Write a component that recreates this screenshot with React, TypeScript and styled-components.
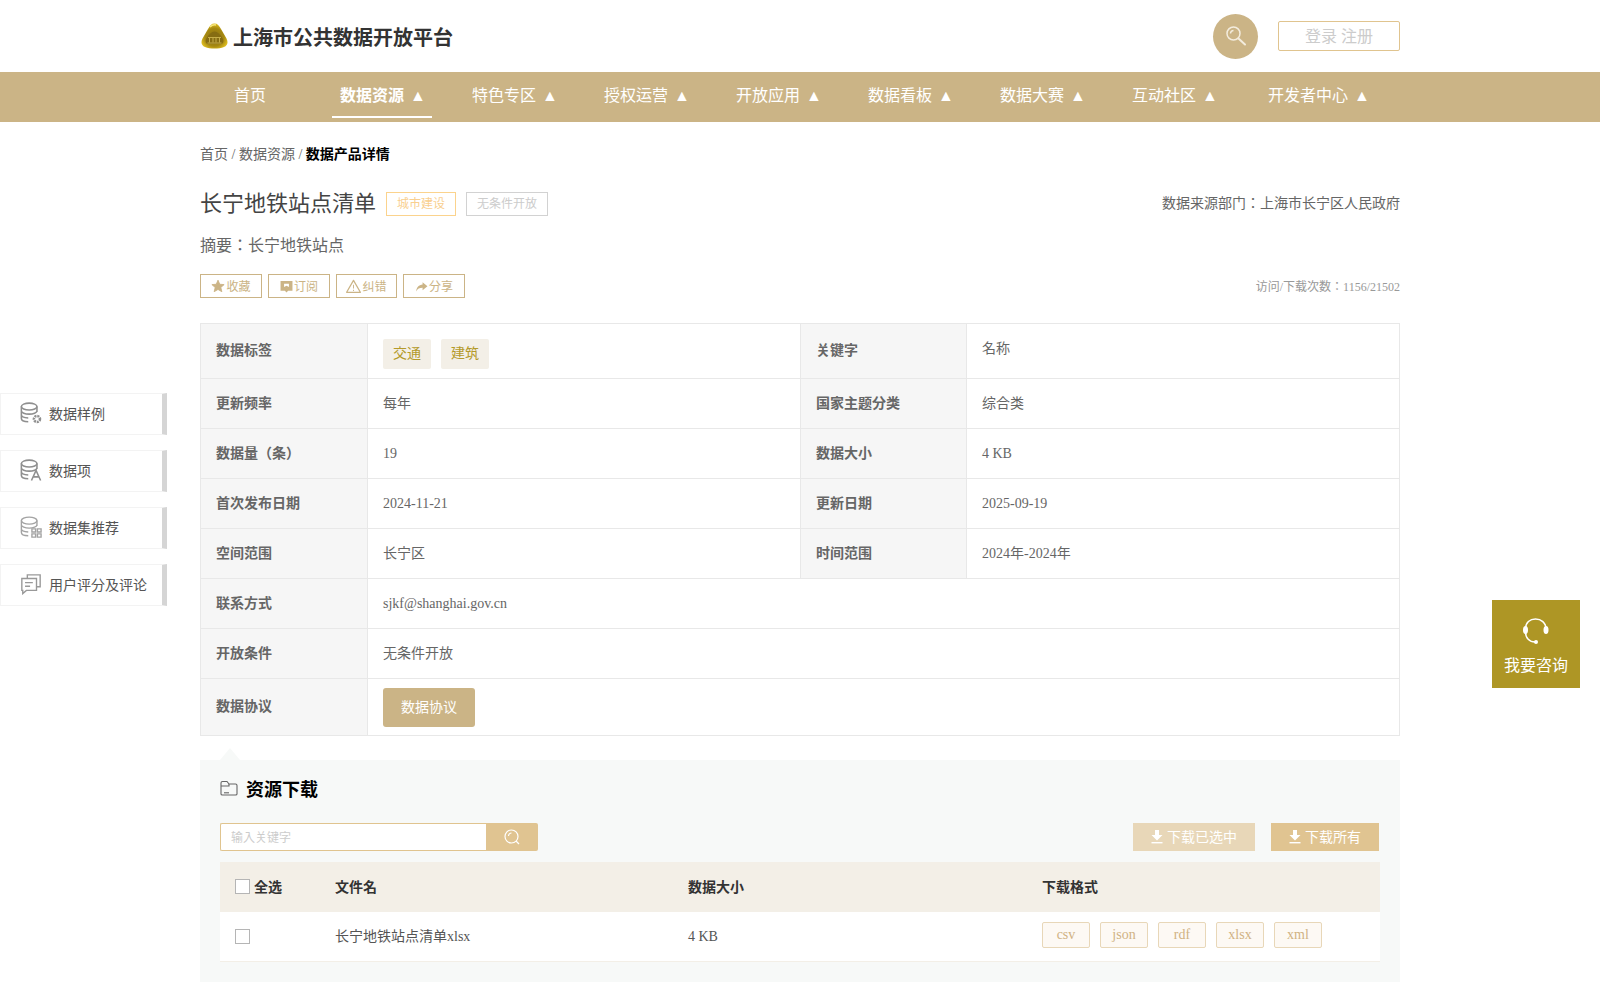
import React from 'react';
import styled, { createGlobalStyle } from 'styled-components';

const GlobalStyle = createGlobalStyle`
  html, body {
    margin: 0;
    padding: 0;
    background: #fff;
    font-family: "Liberation Serif", "Noto Sans CJK JP", serif;
    color: #666;
  }
  * { box-sizing: border-box; }
`;

const TopBar = styled.header`
  height: 72px;
  width: 1200px;
  margin: 0 auto;
  display: flex;
  align-items: center;
  justify-content: space-between;
`;

const Brand = styled.div`
  display: flex;
  align-items: center;
  gap: 5px;
  padding-left: 1px;
  font-size: 20px;
  font-weight: 700;
  color: #333;
`;

const TopRight = styled.div`
  display: flex;
  align-items: center;
  gap: 20px;
`;

const RoundSearch = styled.div`
  width: 45px;
  height: 45px;
  border-radius: 50%;
  background: #cbb486;
  display: flex;
  align-items: center;
  justify-content: center;
`;

const LoginBox = styled.div`
  width: 122px;
  height: 30px;
  border: 1px solid #e0c48f;
  border-radius: 2px;
  font-size: 16px;
  line-height: 30px;
  text-align: center;
  color: #ccc;
`;

const NavBar = styled.nav`
  height: 50px;
  background: #cbb486;
`;

const NavInner = styled.div`
  width: 1200px;
  margin: 0 auto;
  display: flex;
  gap: 32px;
`;

const NavItem = styled.div<{ $active?: boolean; $long?: boolean }>`
  width: ${(p) => (p.$long ? '124px' : '100px')};
  height: 46px;
  line-height: 48px;
  text-align: center;
  font-size: 16px;
  white-space: nowrap;
  color: #fff;
  font-weight: ${(p) => (p.$active ? 700 : 400)};
  border-bottom: 2px solid ${(p) => (p.$active ? '#fff' : 'transparent')};
`;

const NavArrow = styled.span`
  margin: 0 -2px 0 2px;
`;

const Main = styled.main`
  width: 1200px;
  margin: 0 auto;
  padding-top: 23px;
`;

const Crumbs = styled.div`
  height: 20px;
  line-height: 20px;
  font-size: 14px;
  color: #666;
  b { color: #000; }
`;

const TitleRow = styled.div`
  margin-top: 27px;
  height: 24px;
  display: flex;
  align-items: center;
`;

const Title = styled.h1`
  margin: 0 10px 6px 0;
  font-size: 22px;
  font-weight: 400;
  color: #444;
`;

const TitleTag = styled.span<{ $muted?: boolean }>`
  height: 24px;
  line-height: 22px;
  padding: 0 10px;
  margin-right: 10px;
  font-size: 12px;
  border: 1px solid ${(p) => (p.$muted ? '#d2d2d2' : '#fbd38d')};
  color: ${(p) => (p.$muted ? '#ccc' : '#f9cf8f')};
`;

const Source = styled.div`
  margin: 0 0 4px auto;
  font-size: 14px;
  color: #666;
`;

const Summary = styled.div`
  margin-top: 18px;
  line-height: 24px;
  font-size: 16px;
  color: #666;
`;

const ActionRow = styled.div`
  margin-top: 16px;
  height: 24px;
  display: flex;
  align-items: center;
  gap: 6px;
`;

const ActionBtn = styled.div<{ $w?: number }>`
  width: ${(p) => p.$w || 62}px;
  height: 24px;
  display: flex;
  align-items: center;
  justify-content: center;
  gap: 1px;
  border: 1px solid #cbb486;
  font-size: 12px;
  color: #cbb486;
`;

const Visits = styled.div`
  margin-left: auto;
  font-size: 12px;
  color: #999;
`;

const InfoTable = styled.div`
  margin-top: 25px;
  border: 1px solid #e8e8e8;
  border-bottom: 0;
`;

const InfoRow = styled.div<{ $h: number; $wide?: boolean }>`
  display: grid;
  grid-template-columns: ${(p) => (p.$wide ? '167px 1fr' : '167px 432px 167px 1fr')};
  height: ${(p) => p.$h}px;
  border-bottom: 1px solid #e8e8e8;
`;

const Label = styled.div`
  display: flex;
  align-items: center;
  padding: 0 0 4px 15px;
  background: #f6f6f6;
  font-size: 14px;
  font-weight: 700;
  color: #666;
  border-right: 1px solid #e8e8e8;
  &:not(:first-child) { border-left: 1px solid #e8e8e8; }
`;

const Value = styled.div<{ $lift?: number }>`
  display: flex;
  align-items: center;
  padding: 0 15px ${(p) => p.$lift || 0}px;
  font-size: 14px;
  color: #666;
`;

const ChipCell = styled.div`
  display: flex;
  align-items: flex-start;
  gap: 10px;
  padding: 15px 15px 0;
`;

const Chip = styled.span`
  width: 48px;
  height: 30px;
  line-height: 30px;
  text-align: center;
  border-radius: 2px;
  font-size: 14px;
  background: #f3efe7;
  color: #b49a2a;
`;

const AgreeBtn = styled.div`
  width: 92px;
  height: 39px;
  line-height: 39px;
  text-align: center;
  border-radius: 3px;
  background: #cbb486;
  color: #fff;
  font-size: 14px;
`;

const Download = styled.section`
  position: relative;
  margin-top: 24px;
  padding: 17px 20px 20px;
  background: #f7f9f8;
  &::before {
    content: '';
    position: absolute;
    left: 20px;
    top: -12px;
    border-left: 10px solid transparent;
    border-right: 10px solid transparent;
    border-bottom: 12px solid #f7f9f8;
  }
`;

const DownloadHead = styled.div`
  height: 26px;
  padding-bottom: 4px;
  display: flex;
  align-items: center;
  gap: 8px;
  font-size: 18px;
  font-weight: 700;
  color: #000;
`;

const Toolbar = styled.div`
  margin-top: 20px;
  height: 28px;
  display: flex;
  align-items: stretch;
`;

const KeywordInput = styled.input`
  width: 266px;
  padding: 2px 10px 0;
  border: 1px solid #e0c48f;
  border-right: 0;
  border-radius: 2px 0 0 2px;
  outline: none;
  background: #fff;
  font: inherit;
  font-size: 12px;
  &::placeholder { color: #ccc; }
`;

const KeywordBtn = styled.div`
  width: 52px;
  background: #e0c491;
  border-radius: 0 2px 2px 0;
  display: flex;
  align-items: center;
  justify-content: center;
`;

const DownBtn = styled.div<{ $light?: boolean; $w: number }>`
  width: ${(p) => p.$w}px;
  margin-left: ${(p) => (p.$light ? 'auto' : '16px')};
  margin-right: ${(p) => (p.$light ? '0' : '1px')};
  padding-bottom: 2px;
  display: flex;
  align-items: center;
  justify-content: center;
  gap: 4px;
  font-size: 14px;
  color: #fff;
  background: ${(p) => (p.$light ? '#e8d7b8' : '#e0c491')};
  svg { margin-top: 2px; }
`;

const FileGrid = styled.div`
  margin-top: 11px;
`;

const FileRow = styled.div<{ $head?: boolean }>`
  display: grid;
  grid-template-columns: 115px 353px 354px 1fr;
  align-items: center;
  height: 50px;
  padding-bottom: ${(p) => (p.$head ? '2px' : '0')};
  font-size: 14px;
  font-weight: ${(p) => (p.$head ? 700 : 400)};
  color: ${(p) => (p.$head ? '#333' : '#555')};
  background: ${(p) => (p.$head ? '#f3efe7' : '#fff')};
  border-bottom: ${(p) => (p.$head ? '0' : '1px solid #f3efe7')};
`;

const CheckCell = styled.div`
  display: flex;
  align-items: center;
  gap: 4px;
  padding-left: 15px;
`;

const CheckBox = styled.span`
  width: 15px;
  height: 15px;
  background: #fff;
  border: 1px solid #b5b5b5;
`;

const FileName = styled.div`
  padding-bottom: 4px;
`;

const Formats = styled.div`
  display: flex;
  gap: 10px;
  padding-bottom: 3px;
`;

const FormatTag = styled.span`
  width: 48px;
  height: 26px;
  line-height: 24px;
  text-align: center;
  border: 1px solid #e8d7b8;
  border-radius: 2px;
  background: #fdf9f4;
  color: #d0b283;
  font-size: 14px;
`;

const SideTabs = styled.aside`
  position: absolute;
  left: 0;
  top: 393px;
  width: 167px;
  display: flex;
  flex-direction: column;
  gap: 15px;
`;

const SideTab = styled.div`
  height: 42px;
  padding-bottom: 2px;
  display: flex;
  align-items: center;
  gap: 7px;
  padding-left: 19px;
  font-size: 14px;
  color: #555;
  background: #fff;
  border: 1px solid #f3f3f3;
  border-right: 5px solid #d5d5d5;
`;

const Consult = styled.div`
  position: absolute;
  left: 1492px;
  top: 600px;
  width: 88px;
  height: 88px;
  padding-top: 17px;
  background: #ae9625;
  color: #fff;
  font-size: 16px;
  text-align: center;
  svg { display: block; margin: 0 auto 7px; }
`;

const Logo = () => (
  <svg width="27" height="26" viewBox="0 0 27 26">
    <defs>
      <radialGradient id="gold" cx="0.5" cy="0.55" r="0.65">
        <stop offset="0" stopColor="#8a6f10" />
        <stop offset="0.55" stopColor="#a58812" />
        <stop offset="0.8" stopColor="#d8b81e" />
        <stop offset="1" stopColor="#e9cf3a" />
      </radialGradient>
    </defs>
    <path d="M13.5 0.500 C16.500 0.500 18 2.500 20 6 L25.500 15.500 C27.500 19.500 26.500 22.500 23 24 C18 26 9 26 4 24 C0.500 22.500 -0.500 19.500 1.500 15.500 L7 6 C9 2.500 10.500 0.500 13.500 0.500 Z" fill="url(#gold)" />
    <path d="M5 16 C8 11 10.500 8.500 13.500 8.500 C16.500 8.500 19 11 22 16 C23 19 22 20.500 20 21 H7 C5 20.500 4 19 5 16 Z" fill="#866c12" />
    <path d="M7 14.500 H20 M8.500 15 V19.500 M12 15 V19.500 M15 15 V19.500 M18.500 15 V19.500 M6.500 20 H20.500" stroke="#c6ad48" strokeWidth="1" fill="none" />
    <path d="M9 4 C11 2 13 1.500 15 2" stroke="#f6e67c" strokeWidth="1.500" fill="none" />
  </svg>
);

const SearchIcon = () => (
  <svg width="20" height="20" viewBox="0 0 20 20" fill="none" stroke="#f3ecdd" strokeWidth="1.500">
    <circle cx="7.500" cy="7.500" r="6.500" />
    <path d="M4.500 7.500 A3 3 0 0 1 7.500 4.500" />
    <path d="M12.500 12.500 L19 18.500" strokeWidth="2" strokeLinecap="round" />
  </svg>
);

const StarIcon = () => (
  <svg width="14" height="14" viewBox="0 0 24 24" fill="#cbb486">
    <path d="M12 2l3 7 7.500.6-5.700 4.900 1.800 7.300L12 17.900 5.400 21.800l1.800-7.300L1.500 9.600 9 9z" strokeWidth="1.500" stroke="#cbb486" strokeLinejoin="round" />
  </svg>
);

const BookmarkIcon = () => (
  <svg width="13" height="13" viewBox="0 0 24 24" fill="#cbb486">
    <path d="M1 2h22v18h-8l-3 3-3-3H1z" />
    <path d="M7.500 7h9v6l-4.500-2.500L7.500 13z" fill="#fff" />
  </svg>
);

const WarnIcon = () => (
  <svg width="15" height="14" viewBox="0 0 24 22" fill="none" stroke="#cbb486" strokeWidth="2">
    <path d="M12 2 L23 21 H1 Z" strokeLinejoin="round" />
    <path d="M12 9 V15 M12 17 V19" strokeWidth="1.500" />
  </svg>
);

const ShareIcon = () => (
  <svg width="13" height="13" viewBox="0 0 24 24" fill="#cbb486">
    <path d="M14 4 L23 11.500 L14 19 V14.500 C8 14.500 4.500 16.500 2 21 C3 14 7 9 14 8.500 Z" />
  </svg>
);

const DbBase = () => (
  <>
    <ellipse cx="10" cy="5" rx="8.500" ry="3.800" />
    <path d="M1.500 5 V18 C1.500 20 4.500 21.500 9 21.500 M18.500 5 V11 M1.500 9.500 C1.500 11.700 5.500 13.200 10 13.200 C14.500 13.200 18.500 11.700 18.500 9.500 M1.500 14 C1.500 16 5 17.300 9 17.500" />
  </>
);

const DbGearIcon = () => (
  <svg width="22" height="22" viewBox="0 0 24 24" fill="none" stroke="#8f8f8f" strokeWidth="1.700">
    <DbBase />
    <circle cx="18.500" cy="18.500" r="3.300" strokeWidth="2.800" strokeDasharray="2.200 0.900" />
  </svg>
);

const DbLetterIcon = () => (
  <svg width="22" height="22" viewBox="0 0 24 24" fill="none" stroke="#8f8f8f" strokeWidth="1.700">
    <DbBase />
    <path d="M12.500 23.500 L17.500 12.500 L22.500 23.500 M14.500 19.500 H20.500" />
  </svg>
);

const DbGridIcon = () => (
  <svg width="22" height="22" viewBox="0 0 24 24" fill="none" stroke="#a3a3a3" strokeWidth="1.500">
    <DbBase />
    <path d="M13 14h4v3.500h-4z M19 14h4v3.500h-4z M13 19.500h4v3.500h-4z M19 19.500h4v3.500h-4z" />
  </svg>
);

const CommentIcon = () => (
  <svg width="22" height="22" viewBox="0 0 24 24" fill="none" stroke="#999" strokeWidth="1.500">
    <path d="M8 6 V2 H22 V15 H18" />
    <path d="M2 6 H18 V19 H7 L3 22.500 V19 H2 Z" />
    <path d="M5.500 10.500 H14 M5.500 14.500 H11" />
  </svg>
);

const FolderIcon = () => (
  <svg width="18" height="16" viewBox="0 0 18 16" fill="none" stroke="#666" strokeWidth="1.100">
    <path d="M1 14 V3 C1 2 1.500 1.500 2.500 1.500 H7 L9 4 H15.500 C16.500 4 17 4.500 17 5.500 V14 C17 14.800 16.500 15 15.500 15 H2.500 C1.500 15 1 14.800 1 14 Z" />
    <path d="M1 6 H9 L9 4" />
    <path d="M4 12.800 H9" />
  </svg>
);

const SmallSearchIcon = () => (
  <svg width="16" height="16" viewBox="0 0 16 16" fill="none" stroke="#fff" strokeWidth="1.200">
    <circle cx="7.500" cy="7.500" r="6.500" />
    <path d="M4.500 7 A3 3 0 0 1 7.500 4" />
    <path d="M12 12 L15 15" />
  </svg>
);

const DownIcon = () => (
  <svg width="12" height="14" viewBox="0 0 12 14" fill="#fff">
    <path d="M4 0 H8 V5 H11.500 L6 10.500 L0.500 5 H4 Z" />
    <rect x="0.500" y="12" width="11" height="1.400" />
  </svg>
);

const HeadsetIcon = () => (
  <svg width="28" height="28" viewBox="0 0 28 28" fill="none" stroke="#fff" strokeWidth="1.500">
    <path d="M3.500 12 C3.500 5.500 8 2 13.500 2 C19 2 24 5.500 24 12" />
    <path d="M3.500 15 C3.500 21 7.500 25 13 25" />
    <ellipse cx="3.500" cy="13" rx="2.500" ry="4" fill="#fff" stroke="none" />
    <ellipse cx="24" cy="13" rx="2.500" ry="4" fill="#fff" stroke="none" />
    <circle cx="14" cy="25" r="2" fill="#fff" stroke="none" />
  </svg>
);

const navItems = ['首页', '数据资源', '特色专区', '授权运营', '开放应用', '数据看板', '数据大赛', '互动社区', '开发者中心'];

const sideItems = [
  { icon: <DbGearIcon />, text: '数据样例' },
  { icon: <DbLetterIcon />, text: '数据项' },
  { icon: <DbGridIcon />, text: '数据集推荐' },
  { icon: <CommentIcon />, text: '用户评分及评论' },
];

const infoRows = [
  ['更新频率', '每年', '国家主题分类', '综合类'],
  ['数据量（条）', '19', '数据大小', '4 KB'],
  ['首次发布日期', '2024-11-21', '更新日期', '2025-09-19'],
  ['空间范围', '长宁区', '时间范围', '2024年-2024年'],
];

const formats = ['csv', 'json', 'rdf', 'xlsx', 'xml'];

// chinese text sits a bit lower than latin in the fallback font, so lift it
const liftFor = (text: string) => (/[^\x00-\x7f]/.test(text) ? 4 : 0);

const App = () => {
  return (
    <>
      <GlobalStyle />
      <TopBar>
        <Brand>
          <Logo />
          上海市公共数据开放平台
        </Brand>
        <TopRight>
          <RoundSearch>
            <SearchIcon />
          </RoundSearch>
          <LoginBox>登录 注册</LoginBox>
        </TopRight>
      </TopBar>

      <NavBar>
        <NavInner>
          {navItems.map((item, i) => (
            <NavItem key={item} $active={i === 1} $long={i === 8}>
              {item}
              {i > 0 && <NavArrow> ▲</NavArrow>}
            </NavItem>
          ))}
        </NavInner>
      </NavBar>

      <Main>
        <Crumbs>首页 / 数据资源 / <b>数据产品详情</b></Crumbs>

        <TitleRow>
          <Title>长宁地铁站点清单</Title>
          <TitleTag>城市建设</TitleTag>
          <TitleTag $muted>无条件开放</TitleTag>
          <Source>数据来源部门：上海市长宁区人民政府</Source>
        </TitleRow>

        <Summary>摘要：长宁地铁站点</Summary>

        <ActionRow>
          <ActionBtn><StarIcon />收藏</ActionBtn>
          <ActionBtn><BookmarkIcon />订阅</ActionBtn>
          <ActionBtn $w={61}><WarnIcon />纠错</ActionBtn>
          <ActionBtn><ShareIcon />分享</ActionBtn>
          <Visits>访问/下载次数：1156/21502</Visits>
        </ActionRow>

        <InfoTable>
          <InfoRow $h={55}>
            <Label>数据标签</Label>
            <ChipCell>
              <Chip>交通</Chip>
              <Chip>建筑</Chip>
            </ChipCell>
            <Label>关键字</Label>
            <Value $lift={9}>名称</Value>
          </InfoRow>
          {infoRows.map((row) => (
            <InfoRow key={row[0]} $h={50}>
              <Label>{row[0]}</Label>
              <Value $lift={liftFor(row[1])}>{row[1]}</Value>
              <Label>{row[2]}</Label>
              <Value $lift={liftFor(row[3])}>{row[3]}</Value>
            </InfoRow>
          ))}
          <InfoRow $h={50} $wide>
            <Label>联系方式</Label>
            <Value>sjkf@shanghai.gov.cn</Value>
          </InfoRow>
          <InfoRow $h={50} $wide>
            <Label>开放条件</Label>
            <Value $lift={4}>无条件开放</Value>
          </InfoRow>
          <InfoRow $h={57} $wide>
            <Label>数据协议</Label>
            <Value><AgreeBtn>数据协议</AgreeBtn></Value>
          </InfoRow>
        </InfoTable>

        <Download>
          <DownloadHead>
            <FolderIcon />
            资源下载
          </DownloadHead>
          <Toolbar>
            <KeywordInput placeholder="输入关键字" />
            <KeywordBtn><SmallSearchIcon /></KeywordBtn>
            <DownBtn $light $w={122}><DownIcon />下载已选中</DownBtn>
            <DownBtn $w={108}><DownIcon />下载所有</DownBtn>
          </Toolbar>
          <FileGrid>
            <FileRow $head>
              <CheckCell><CheckBox />全选</CheckCell>
              <div>文件名</div>
              <div>数据大小</div>
              <div>下载格式</div>
            </FileRow>
            <FileRow>
              <CheckCell><CheckBox /></CheckCell>
              <FileName>长宁地铁站点清单xlsx</FileName>
              <div>4 KB</div>
              <Formats>
                {formats.map((f) => (
                  <FormatTag key={f}>{f}</FormatTag>
                ))}
              </Formats>
            </FileRow>
          </FileGrid>
        </Download>
      </Main>

      <SideTabs>
        {sideItems.map((item) => (
          <SideTab key={item.text}>
            {item.icon}
            {item.text}
          </SideTab>
        ))}
      </SideTabs>

      <Consult>
        <HeadsetIcon />
        我要咨询
      </Consult>
    </>
  );
};

export default App;
